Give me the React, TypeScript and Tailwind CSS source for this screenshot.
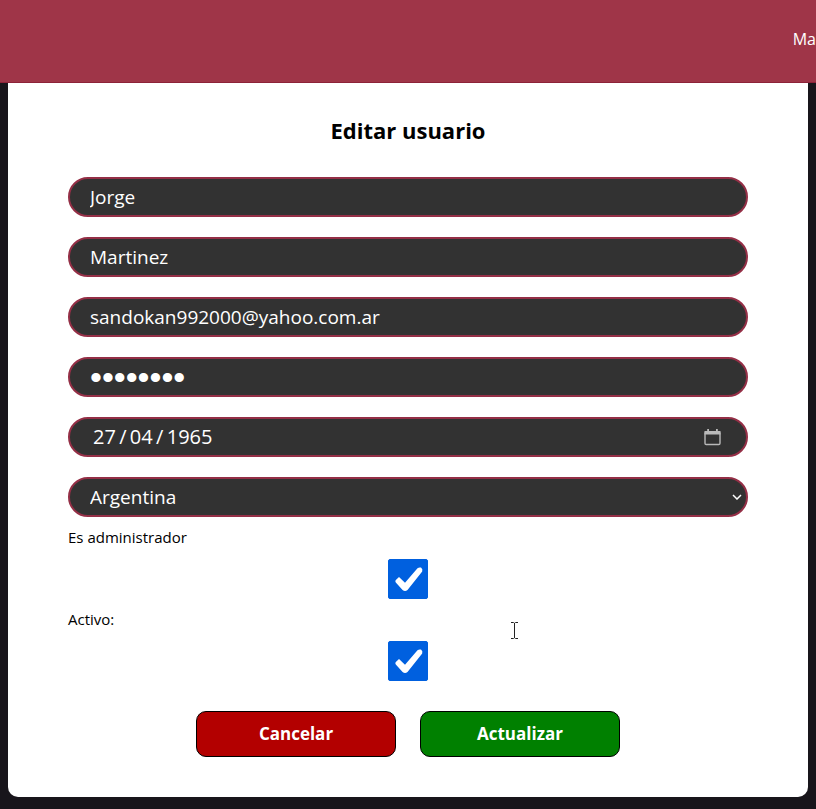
import { useState } from "react";
import type { ReactNode } from "react";

const fieldClass =
  "block h-10 w-full rounded-full border-2 border-[#942f46] bg-[#323232] px-5 text-white outline-none";

type TextFieldProps = { label: string; type: string; initial: string };

function TextField({ label, type, initial }: TextFieldProps) {
  const [value, setValue] = useState(initial);
  return (
    <input
      aria-label={label}
      type={type}
      value={value}
      onChange={(e) => setValue(e.target.value)}
      className={`${fieldClass} ${type === "password" ? "font-['Liberation_Sans',sans-serif] text-[34px]" : "text-[19px]"}`}
    />
  );
}

function DateField() {
  const [value, setValue] = useState("27\u2009/\u200904\u2009/\u20091965");
  return (
    <div className="flex h-10 w-full items-center rounded-full border-2 border-[#942f46] bg-[#323232] pl-[23px] pr-[25px]">
      <input
        aria-label="Fecha de nacimiento"
        type="text"
        value={value}
        onChange={(e) => setValue(e.target.value)}
        className="min-w-0 flex-1 bg-transparent text-xl text-white outline-none"
      />
      <button type="button" aria-label="Abrir calendario">
        <svg width="17" height="17" viewBox="0 0 17 17" className="block">
          <rect x="1" y="3" width="15" height="12.5" rx="1.2" fill="none" stroke="#b9b9b9" strokeWidth="1.4" />
          <path d="M.5 2h16v3.6H.5zM3.2 0h1.8v3H3.2zM12 0h1.8v3H12z" fill="#b9b9b9" />
        </svg>
      </button>
    </div>
  );
}

function CheckField({ id, children }: { id: string; children: ReactNode }) {
  return (
    <div className="mt-[9px] flex flex-col gap-[11px]">
      <label htmlFor={id} className="text-[15px] leading-[22px] text-black">
        {children}
      </label>
      <div className="grid size-10 self-center">
        <input
          id={id}
          type="checkbox"
          defaultChecked
          className="peer col-start-1 row-start-1 size-10 appearance-none rounded-xs border border-[#0060df] checked:bg-[#0060df]"
        />
        <svg
          viewBox="0 0 40 40"
          className="pointer-events-none invisible col-start-1 row-start-1 size-10 peer-checked:visible"
        >
          <path
            d="M7.6 21.2L11 18L17 23.8L29.5 9.3Q31 8 33 8.6Q35 10 34.2 12.5L19.5 31Q17 33 14.6 31L7.8 23.6Q7 22.4 7.6 21.2Z"
            fill="white"
          />
        </svg>
      </div>
    </div>
  );
}

const actionClass = "h-[46px] w-[200px] rounded-[10px] border border-black text-[17px] font-bold text-white";

export default function App() {
  return (
    <div className="relative min-h-screen bg-[#18151b] pb-3 font-['Open_Sans',sans-serif]">
      <header className="flex h-[83px] items-center justify-end overflow-hidden border-b border-[#8c2238] bg-[#9f3548] pb-1">
        <a href="#" className="text-base whitespace-nowrap text-white">
          Ma
        </a>
      </header>
      <main className="mx-2 rounded-b-[10px] bg-white px-[60px] pt-[31px] pb-10">
        <h1 className="text-center text-[22px] leading-8 font-bold text-black">Editar usuario</h1>
        <form className="mt-[31px]" onSubmit={(e) => e.preventDefault()}>
          <div className="flex flex-col gap-5">
            <TextField label="Nombre" type="text" initial="Jorge" />
            <TextField label="Apellido" type="text" initial="Martinez" />
            <TextField label="Correo" type="email" initial="sandokan992000@yahoo.com.ar" />
            <TextField label="Contraseña" type="password" initial="12345678" />
            <DateField />
            <div className="grid items-center">
              <select
                aria-label="País"
                className={`${fieldClass} col-start-1 row-start-1 appearance-none text-[19px]`}
              >
                <option>Argentina</option>
              </select>
              <svg
                width="10"
                height="6"
                viewBox="0 0 10 6"
                className="pointer-events-none col-start-1 row-start-1 mr-[6px] justify-self-end"
              >
                <path d="M1 1L5 5L9 1" fill="none" stroke="white" strokeWidth="1.5" />
              </svg>
            </div>
          </div>
          <CheckField id="admin">Es administrador</CheckField>
          <CheckField id="activo">Activo:</CheckField>
          <div className="mt-[30px] flex flex-wrap justify-center gap-6">
            <button type="button" className={`${actionClass} bg-[#b30000]`}>
              Cancelar
            </button>
            <button type="submit" className={`${actionClass} bg-[#008000]`}>
              Actualizar
            </button>
          </div>
        </form>
      </main>
      <svg
        width="9"
        height="17"
        viewBox="0 0 9 17"
        className="pointer-events-none absolute top-[622px] left-[510px]"
      >
        <path d="M1 .5h2.5l1 .8l1-.8H8M1 16.5h2.5l1-.8l1 .8H8M4.5 1v15" fill="none" stroke="#222" />
      </svg>
    </div>
  );
}
